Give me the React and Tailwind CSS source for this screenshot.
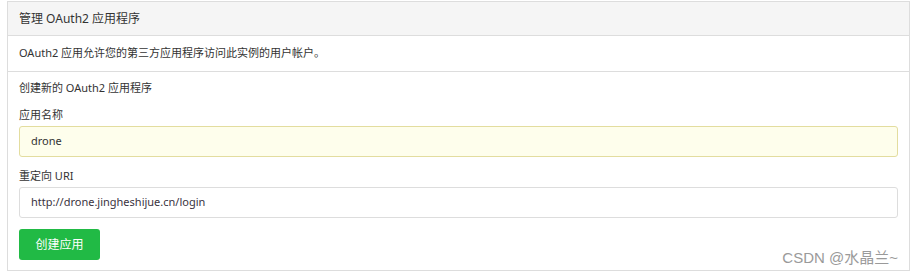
export default function App() {
  const font = { fontFamily: '"Noto Sans", "Noto Sans CJK SC", sans-serif' };
  return (
    <div className="relative w-[913px] h-[276px] bg-white pl-[7px] pr-[3px] pt-[1px] text-[#333]" style={font}>
      <div className="border border-[#dddddd] w-[903px]">
        <div className="h-[34px] bg-[#f5f5f5] border-b border-[#dddddd] px-[11px] flex items-center text-[12px] text-[#333]">
          管理 OAuth2 应用程序
        </div>
        <div className="h-[36px] border-b border-[#dddddd] px-[11px] flex items-center text-[11px]">
          OAuth2 应用允许您的第三方应用程序访问此实例的用户帐户。
        </div>
        <div className="px-[11px] pt-[8px] pb-[10px] text-[11px]">
          <div className="h-[16px] leading-[16px]">创建新的 OAuth2 应用程序</div>
          <div className="h-[16px] leading-[16px] mt-[11px]">应用名称</div>
          <div className="mt-[3px] h-[31px] rounded-[3px] border border-[#e3dd9f] bg-[#fefeec] px-[11px] flex items-center text-[11px]">
            drone
          </div>
          <div className="h-[16px] leading-[16px] mt-[11px]">重定向 URI</div>
          <div className="mt-[3px] h-[31px] rounded-[3px] border border-[#dddddd] bg-white px-[11px] flex items-center text-[11px] text-[#3a3340]">
            http://drone.jingheshijue.cn/login
          </div>
          <button className="mt-[11px] w-[81px] h-[31px] rounded-[3px] bg-[#21ba45] text-white text-[12px] flex items-center justify-center">
            创建应用
          </button>
        </div>
      </div>
      <div
        className="absolute right-[15px] top-[248px] text-[15px] text-[#9a9a9a] leading-[20px]"
        style={{ fontFamily: '"Liberation Sans", "Noto Sans CJK SC", sans-serif' }}
      >
        CSDN @水晶兰~
      </div>
    </div>
  );
}
